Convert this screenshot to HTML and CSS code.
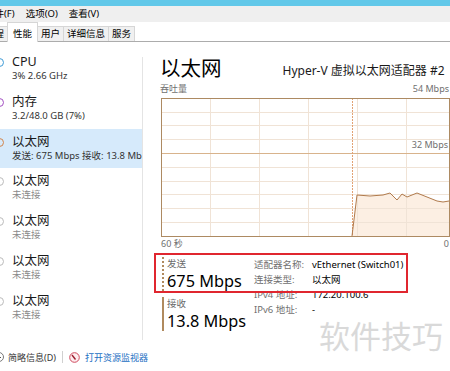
FILE: index.html
```html
<!DOCTYPE html>
<html lang="zh-CN">
<head>
    <meta charset="UTF-8">
    <meta name="viewport" content="width=device-width, initial-scale=1.0">
    <title>任务管理器 - 性能</title>
    <link rel="stylesheet" href="styles.css">
</head>
<body>
    <div class="titlebar"></div>

    <div class="menubar">
        <span class="menu-item first">文件(F)</span>
        <span class="menu-item">选项(O)</span>
        <span class="menu-item">查看(V)</span>
    </div>

    <div class="tabs">
        <span class="tab first">进程</span>
        <span class="tab active">性能</span>
        <span class="tab">用户</span>
        <span class="tab">详细信息</span>
        <span class="tab">服务</span>
    </div>

    <div class="main">
        <div class="sidebar">
            <ul class="res-list">
                <li class="res-item">
                    <span class="dot cpu"></span>
                    <div>
                        <div class="res-title">CPU</div>
                        <div class="res-sub">3% 2.66 GHz</div>
                    </div>
                </li>
                <li class="res-item">
                    <span class="dot mem"></span>
                    <div>
                        <div class="res-title">内存</div>
                        <div class="res-sub">3.2/48.0 GB (7%)</div>
                    </div>
                </li>
                <li class="res-item selected">
                    <span class="dot net"></span>
                    <div>
                        <div class="res-title">以太网</div>
                        <div class="res-sub">发送: 675 Mbps 接收: 13.8 Mbps</div>
                    </div>
                </li>
                <li class="res-item">
                    <span class="dot off"></span>
                    <div>
                        <div class="res-title">以太网</div>
                        <div class="res-sub muted">未连接</div>
                    </div>
                </li>
                <li class="res-item">
                    <span class="dot off"></span>
                    <div>
                        <div class="res-title">以太网</div>
                        <div class="res-sub muted">未连接</div>
                    </div>
                </li>
                <li class="res-item">
                    <span class="dot off"></span>
                    <div>
                        <div class="res-title">以太网</div>
                        <div class="res-sub muted">未连接</div>
                    </div>
                </li>
                <li class="res-item">
                    <span class="dot off"></span>
                    <div>
                        <div class="res-title">以太网</div>
                        <div class="res-sub muted">未连接</div>
                    </div>
                </li>
            </ul>
        </div>

        <div class="panel">
            <div class="panel-head">
                <span class="panel-title">以太网</span>
                <span class="panel-device">Hyper-V 虚拟以太网适配器 #2</span>
            </div>

            <div class="axis-row">
                <span>吞吐量</span>
                <span>54 Mbps</span>
            </div>

            <div class="graph">
                <svg width="289" height="139" viewBox="0 0 289 139">
                    <polygon fill="#fcefe3" points="191,138 196,97 209,98 222,97 229,95 236,102 241,96 246,99 256,95 266,99 276,103 282,104 288,103 288,138"/>
                    <g stroke="#f0e3d6" stroke-width="1">
                        <line x1="0" y1="14.5" x2="289" y2="14.5"/>
                        <line x1="0" y1="27.5" x2="289" y2="27.5"/>
                        <line x1="0" y1="41.5" x2="289" y2="41.5"/>
                        <line x1="0" y1="69.5" x2="289" y2="69.5"/>
                        <line x1="0" y1="83.5" x2="289" y2="83.5"/>
                        <line x1="0" y1="96.5" x2="289" y2="96.5"/>
                        <line x1="0" y1="110.5" x2="289" y2="110.5"/>
                        <line x1="0" y1="124.5" x2="289" y2="124.5"/>
                        <line x1="49.5" y1="0" x2="49.5" y2="139"/>
                        <line x1="98.5" y1="0" x2="98.5" y2="139"/>
                        <line x1="147.5" y1="0" x2="147.5" y2="139"/>
                        <line x1="196.5" y1="0" x2="196.5" y2="139"/>
                        <line x1="245.5" y1="0" x2="245.5" y2="139"/>
                    </g>
                    <line x1="0" y1="55.5" x2="289" y2="55.5" stroke="#d8b38c" stroke-width="1"/>
                    <line x1="191.5" y1="0" x2="191.5" y2="139" stroke="#e2a274" stroke-width="1" stroke-dasharray="2 1"/>
                    <polyline fill="none" stroke="#b07a4c" stroke-width="1" points="191,138 196,97 209,98 222,97 229,95 236,102 241,96 246,99 256,95 266,99 276,103 282,104 288,103"/>
                    <rect x="0.5" y="0.5" width="288" height="138" fill="none" stroke="#ad8a62" stroke-width="1"/>
                </svg>
                <span class="scale-label">32 Mbps</span>
            </div>

            <div class="axis-row time-row">
                <span>60 秒</span>
                <span>0</span>
            </div>

            <div class="details">
                <div class="stats">
                    <div class="stat send">
                        <div class="stat-label">发送</div>
                        <div class="stat-value">675 Mbps</div>
                    </div>
                    <div class="stat recv">
                        <div class="stat-label">接收</div>
                        <div class="stat-value">13.8 Mbps</div>
                    </div>
                </div>
                <div class="info">
                    <span class="info-key">适配器名称:</span><span>vEthernet (Switch01)</span>
                    <span class="info-key">连接类型:</span><span>以太网</span>
                    <span class="info-key">IPv4 地址:</span><span>172.20.100.6</span>
                    <span class="info-key">IPv6 地址:</span><span>-</span>
                </div>
            </div>
        </div>
    </div>

    <div class="footer">
        <svg class="brief-icon" width="10" height="10" viewBox="0 0 10 10">
            <circle cx="5" cy="5" r="4.5" fill="none" stroke="#777" stroke-width="1"/>
            <polyline points="3,6 5,4 7,6" fill="none" stroke="#555" stroke-width="1"/>
        </svg>
        <span class="brief">简略信息(D)</span>
        <span class="sep"></span>
        <svg class="monitor-icon" width="11" height="11" viewBox="0 0 11 11">
            <circle cx="5.5" cy="5.5" r="4.8" fill="#fdecee" stroke="#cf4a5e" stroke-width="1"/>
            <line x1="3" y1="3" x2="6.5" y2="7.5" stroke="#9c1a2c" stroke-width="1.4"/>
        </svg>
        <a class="monitor-link" href="#">打开资源监视器</a>
    </div>

    <!-- annotation & watermark laid over the screenshot -->
    <div class="highlight"></div>
    <div class="watermark">软件技巧</div>
</body>
</html>
```

FILE: styles.css
```css
* {
    box-sizing: border-box;
}
body {
    position: relative;
    width: 450px;
    height: 371px;
    margin: 0;
    overflow: hidden;
    background: #fff;
    color: #000;
    font-family: "Noto Sans", "Noto Sans CJK SC", sans-serif;
    font-size: 9.5px;
}
.titlebar {
    height: 6px;
    background: #62c8e9;
}
.menubar {
    display: flex;
    gap: 11px;
    height: 16px;
    background: #efefef;
    line-height: 16px;
    white-space: nowrap;
}
.menu-item.first {
    margin-left: -15px;
}
.tabs {
    display: flex;
    align-items: flex-end;
    height: 20px;
    border-bottom: 1px solid #acacac;
    white-space: nowrap;
}
.tab {
    height: 15px;
    margin-left: -1px;
    padding: 0 3px;
    border: 1px solid #d6d6d6;
    border-bottom: none;
    background: #f0f0f0;
    line-height: 14px;
}
.tab.first {
    margin-left: -19px;
}
.tab.active {
    position: relative;
    height: 20px;
    margin-bottom: -1px;
    padding: 3px 5px 0;
    background: #fff;
    line-height: 15px;
}
.main {
    display: flex;
    height: 301px;
}
.sidebar {
    flex-shrink: 0;
    width: 143px;
    height: 283px;
    margin-top: 15px;
    border-right: 1px solid #e4e4e4;
}
.res-list {
    list-style: none;
    margin: -7px 0 0;
    padding: 0;
}
.res-item {
    display: flex;
    height: 40px;
    padding-top: 4px;
    overflow: hidden;
    white-space: nowrap;
}
.res-item.selected {
    margin-top: -1px;
    height: 39px;
    padding-top: 5px;
    margin-bottom: 1px;
    background: #d6eafb;
}
.dot {
    flex-shrink: 0;
    width: 9px;
    height: 9px;
    margin: 3.5px 8px 0 -5px;
    border: 1px solid #bbb;
    border-radius: 50%;
}
.dot.cpu { border-color: #3f9bd6; }
.dot.mem { border-color: #a24fc2; }
.dot.net { border-color: #d2844a; }
.res-title {
    font-size: 12.5px;
    line-height: 16px;
    color: #1a1a1a;
}
.res-sub {
    font-size: 9.5px;
    line-height: 12px;
    color: #333;
}
.res-sub.muted {
    color: #8a8a8a;
}
.panel {
    flex: 1;
    min-width: 0;
    padding: 13px 0 0 17px;
    overflow: hidden;
}
.panel-head {
    display: flex;
    align-items: center;
    height: 26px;
    white-space: nowrap;
}
.panel-title {
    font-size: 20.5px;
    line-height: 26px;
}
.panel-device {
    margin-left: 61px;
    padding-top: 3px;
    font-size: 12px;
    color: #1a1a1a;
}
.axis-row {
    display: flex;
    justify-content: space-between;
    margin-top: 2px;
    padding-right: 1px;
    font-size: 9px;
    line-height: 12px;
    color: #707070;
}
.graph {
    position: relative;
    width: 289px;
    height: 139px;
    margin: 3px 0 0 1px;
}
.graph svg {
    display: block;
}
.scale-label {
    position: absolute;
    top: 41px;
    right: 2px;
    font-size: 9px;
    line-height: 12px;
    color: #707070;
}
.time-row {
    margin-top: 1px;
    padding-left: 1px;
}
.details {
    display: flex;
    margin-top: 7px;
}
.stats {
    width: 92px;
    margin-left: 2px;
}
.stat {
    padding-left: 3px;
    border-left: 2px dotted #b08a5e;
}
.stat.recv {
    margin-top: 6px;
    border-left-style: solid;
}
.stat-label {
    font-size: 9.5px;
    line-height: 14px;
    color: #6a6a6a;
}
.stat-value {
    font-size: 16.3px;
    line-height: 20px;
    white-space: nowrap;
}
.info {
    display: grid;
    grid-template-columns: 58px auto;
    align-content: start;
    font-size: 9.5px;
    line-height: 15px;
    white-space: nowrap;
}
.info-key {
    color: #707070;
}
.footer {
    display: flex;
    align-items: center;
    height: 28px;
    font-size: 9px;
    white-space: nowrap;
}
.brief-icon {
    margin: 0 4px 0 -6px;
}
.brief {
    color: #333;
}
.sep {
    width: 1px;
    height: 12px;
    margin: 0 6px;
    background: #d0d0d0;
}
.monitor-icon {
    margin-right: 5px;
}
.monitor-link {
    color: #1b6ec2;
    text-decoration: none;
}
.highlight {
    position: absolute;
    top: 253px;
    left: 154px;
    width: 254px;
    height: 40px;
    border: 2px solid #e0262f;
}
.watermark {
    position: absolute;
    top: 319px;
    left: 319px;
    font-family: "Noto Sans CJK SC", sans-serif;
    font-size: 31px;
    line-height: 1;
    color: #d9d9d9;
    white-space: nowrap;
}
```
